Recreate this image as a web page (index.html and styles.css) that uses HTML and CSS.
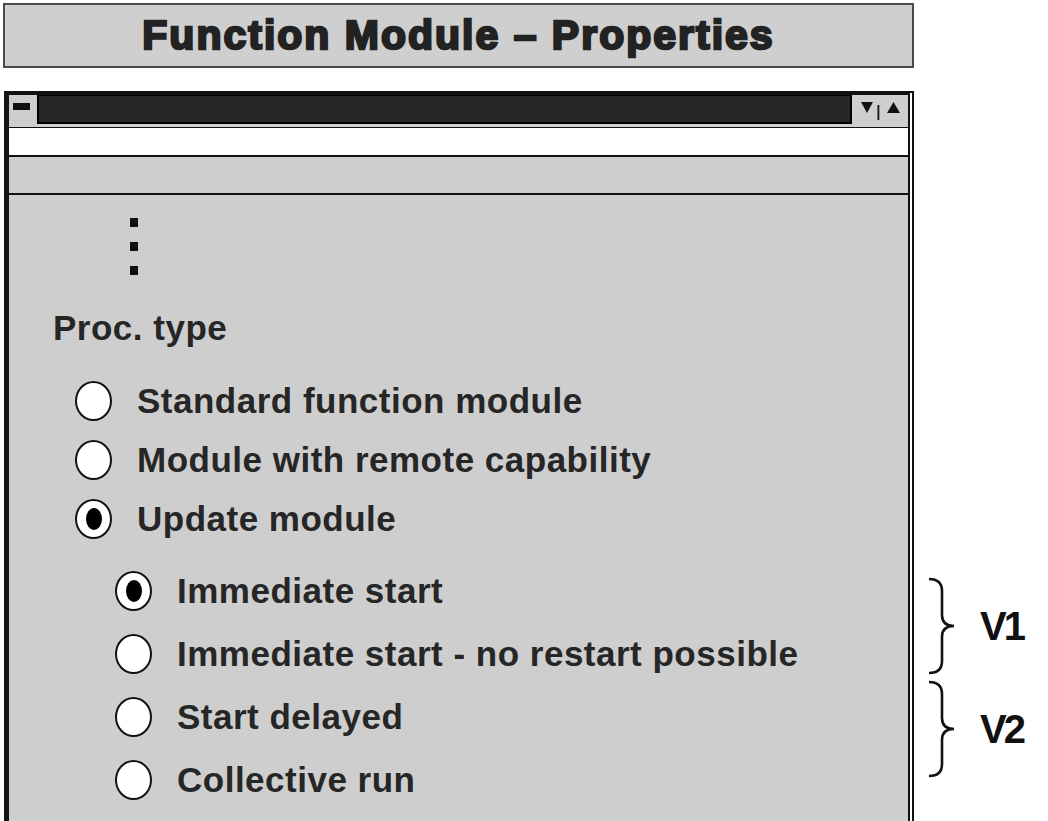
FILE: index.html
```html
<!DOCTYPE html>
<html lang="en">
<head>
    <meta charset="UTF-8">
    <meta name="viewport" content="width=device-width, initial-scale=1.0">
    <title>Function Module – Properties</title>
    <link rel="stylesheet" href="styles.css">
</head>
<body>
    <h1 class="slide-title">Function Module – Properties</h1>

    <div class="stage">
        <div class="window">
            <div class="window-head">
                <div class="sysmenu"><span class="sysmenu-bar"></span></div>
                <div class="caption"></div>
                <div class="winbtns">
                    <svg width="56" height="31" viewBox="0 0 56 31">
                        <polygon points="9,7 21,7 15,18" fill="#111"/>
                        <rect x="25.5" y="10" width="1.8" height="15" fill="#111"/>
                        <polygon points="35,18 48,18 41.5,7" fill="#111"/>
                    </svg>
                </div>
            </div>
            <div class="field"></div>
            <div class="toolbar"></div>

            <div class="content">
                <div class="ellipsis"><span></span><span></span><span></span></div>
                <div class="group-label">Proc. type</div>

                <ul class="options">
                    <li class="option"><span class="radio"></span>Standard function module</li>
                    <li class="option"><span class="radio"></span>Module with remote capability</li>
                    <li class="option"><span class="radio checked"></span>Update module</li>
                </ul>

                <ul class="options sub">
                    <li class="option"><span class="radio checked"></span>Immediate start</li>
                    <li class="option"><span class="radio"></span>Immediate start - no restart possible</li>
                    <li class="option"><span class="radio"></span>Start delayed</li>
                    <li class="option"><span class="radio"></span>Collective run</li>
                </ul>
            </div>
        </div>

        <aside class="notes">
            <div class="note">
                <svg class="brace" width="28" height="98" viewBox="0 0 28 98">
                    <path d="M1,2 Q14,2 14,14 L14,38 Q14,49 26,49 Q14,49 14,60 L14,84 Q14,96 1,96"/>
                </svg>
                <span class="note-label">V1</span>
            </div>
            <div class="note">
                <svg class="brace" width="28" height="98" viewBox="0 0 28 98">
                    <path d="M1,2 Q14,2 14,14 L14,38 Q14,49 26,49 Q14,49 14,60 L14,84 Q14,96 1,96"/>
                </svg>
                <span class="note-label">V2</span>
            </div>
        </aside>
    </div>
</body>
</html>
```

FILE: styles.css
```css
html, body {
    overflow: hidden;
}
body {
    background-color: #ffffff;
    color: #262626;
    font-family: "Liberation Sans", Arial, sans-serif;
    margin: 0;
    padding: 0;
}
.slide-title {
    box-sizing: border-box;
    width: 911px;
    height: 65px;
    margin: 3px 0 0 3px;
    border: 2px solid #4a4a4a;
    background-color: #cfcfcf;
    color: #222;
    font-size: 41px;
    font-weight: bold;
    letter-spacing: 2px;
    line-height: 61px;
    text-align: center;
    -webkit-text-stroke: 2.4px #222;
}
.stage {
    display: flex;
    align-items: flex-start;
    margin-top: 23px;
}
.window {
    box-sizing: border-box;
    width: 910px;
    margin-left: 4px;
    border-top: 4px solid #111;
    border-left: 5px solid #151515;
    border-right: 6px double #111;
    background-color: #cecece;
    background-clip: padding-box;
    padding-bottom: 40px;
}
.window-head {
    display: flex;
    height: 32px;
    border-bottom: 1px solid #111;
}
.sysmenu {
    width: 28px;
    padding: 8px 0 0 4px;
    box-sizing: border-box;
}
.sysmenu-bar {
    display: block;
    width: 17px;
    height: 7px;
    background-color: #111;
}
.caption {
    flex: 1;
    height: 29px;
    box-sizing: border-box;
    border: 2px solid #000;
    border-top-width: 1px;
    background-color: #272727;
}
.winbtns {
    width: 56px;
    height: 31px;
}
.winbtns svg {
    display: block;
}
.field {
    height: 27px;
    background-color: #ffffff;
    border-bottom: 2px solid #111;
}
.toolbar {
    height: 36px;
    border-bottom: 2px solid #111;
}
.content {
    padding-top: 23px;
}
.ellipsis {
    display: flex;
    flex-direction: column;
    gap: 15px;
    margin-left: 121px;
}
.ellipsis span {
    width: 8px;
    height: 9px;
    background-color: #111;
}
.group-label {
    margin: 33px 0 0 44px;
    font-size: 35px;
    font-weight: bold;
    letter-spacing: 0.5px;
    line-height: 40px;
}
.options {
    list-style: none;
    margin: 32px 0 0 66px;
    padding: 0;
    display: flex;
    flex-direction: column;
    gap: 18px;
}
.options.sub {
    margin: 31px 0 0 106px;
    gap: 22px;
}
.option {
    display: flex;
    align-items: center;
    gap: 25px;
    height: 41px;
    font-size: 35px;
    font-weight: bold;
    letter-spacing: 0.5px;
    line-height: 41px;
    white-space: nowrap;
}
.radio {
    box-sizing: border-box;
    flex: none;
    display: flex;
    align-items: center;
    justify-content: center;
    width: 37px;
    height: 40px;
    border: 2px solid #111;
    border-radius: 50%;
    background-color: #ffffff;
}
.radio.checked::after {
    content: "";
    width: 16px;
    height: 22px;
    border-radius: 50%;
    background-color: #000;
}
.notes {
    display: flex;
    flex-direction: column;
    gap: 5px;
    margin-left: 14px;
    padding-top: 486px;
}
.note {
    display: flex;
    align-items: center;
    height: 98px;
}
.brace {
    display: block;
}
.brace path {
    fill: none;
    stroke: #111;
    stroke-width: 2.6;
}
.note-label {
    margin-left: 24px;
    color: #111;
    font-size: 40px;
    font-weight: bold;
    letter-spacing: -3px;
    line-height: 1;
}
```
